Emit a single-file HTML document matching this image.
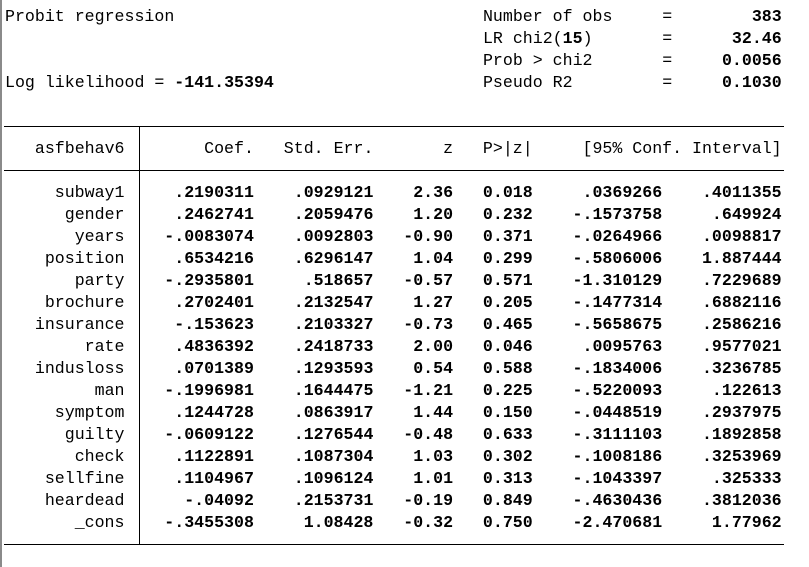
<!DOCTYPE html>
<html><head><meta charset="utf-8"><style>
html,body{margin:0;padding:0;background:#fff;width:809px;height:567px;overflow:hidden}
body{position:relative;font-family:"Liberation Mono","Courier New",monospace;font-size:16.6px;color:#000}
.lb{position:absolute;left:0;top:0;width:2px;height:567px;background:#8a8a8a}
.h{position:absolute;height:1px;background:#000;left:4px;width:780px}
.v{position:absolute;left:139px;top:127px;width:1px;height:418px;background:#000}
.row{position:absolute;left:5px;height:22px;line-height:22px;white-space:pre;width:78ch;margin-top:1px}
.row span{position:absolute;top:0}
.c span{display:inline-block;position:static;text-align:right}
b{font-weight:bold}
.n{width:12ch}.g{width:2ch}.c1{width:11ch}.c2{width:12ch}.c3{width:8ch}.c4{width:8ch}.c5{width:13ch}.c6{width:12ch}.ci{width:25ch}
.d span:not(.n){font-weight:bold}
</style></head><body>
<div class="lb"></div>
<div class="row" style="top:5px"><span style="left:0">Probit regression</span><span style="left:48ch">Number of obs</span><span style="left:66ch">=</span><span style="right:0"><b>383</b></span></div>
<div class="row" style="top:27px"><span style="left:48ch">LR chi2(<b>15</b>)</span><span style="left:66ch">=</span><span style="right:0"><b>32.46</b></span></div>
<div class="row" style="top:49px"><span style="left:48ch">Prob &gt; chi2</span><span style="left:66ch">=</span><span style="right:0"><b>0.0056</b></span></div>
<div class="row" style="top:71px"><span style="left:0">Log likelihood = <b>-141.35394</b></span><span style="left:48ch">Pseudo R2</span><span style="left:66ch">=</span><span style="right:0"><b>0.1030</b></span></div>
<div class="h" style="top:126px"></div>
<div class="h" style="top:170px"></div>
<div class="h" style="top:544px"></div>
<div class="v"></div>
<div class="row c" style="top:137px"><span class="n">asfbehav6</span><span class="g"></span><span class="c1">Coef.</span><span class="c2">Std. Err.</span><span class="c3">z</span><span class="c4">P&gt;|z|</span><span class="ci">[95% Conf. Interval]</span></div>
<div class="row c d" style="top:181px"><span class="n">subway1</span><span class="g"></span><span class="c1">.2190311</span><span class="c2">.0929121</span><span class="c3">2.36</span><span class="c4">0.018</span><span class="c5">.0369266</span><span class="c6">.4011355</span></div>
<div class="row c d" style="top:203px"><span class="n">gender</span><span class="g"></span><span class="c1">.2462741</span><span class="c2">.2059476</span><span class="c3">1.20</span><span class="c4">0.232</span><span class="c5">-.1573758</span><span class="c6">.649924</span></div>
<div class="row c d" style="top:225px"><span class="n">years</span><span class="g"></span><span class="c1">-.0083074</span><span class="c2">.0092803</span><span class="c3">-0.90</span><span class="c4">0.371</span><span class="c5">-.0264966</span><span class="c6">.0098817</span></div>
<div class="row c d" style="top:247px"><span class="n">position</span><span class="g"></span><span class="c1">.6534216</span><span class="c2">.6296147</span><span class="c3">1.04</span><span class="c4">0.299</span><span class="c5">-.5806006</span><span class="c6">1.887444</span></div>
<div class="row c d" style="top:269px"><span class="n">party</span><span class="g"></span><span class="c1">-.2935801</span><span class="c2">.518657</span><span class="c3">-0.57</span><span class="c4">0.571</span><span class="c5">-1.310129</span><span class="c6">.7229689</span></div>
<div class="row c d" style="top:291px"><span class="n">brochure</span><span class="g"></span><span class="c1">.2702401</span><span class="c2">.2132547</span><span class="c3">1.27</span><span class="c4">0.205</span><span class="c5">-.1477314</span><span class="c6">.6882116</span></div>
<div class="row c d" style="top:313px"><span class="n">insurance</span><span class="g"></span><span class="c1">-.153623</span><span class="c2">.2103327</span><span class="c3">-0.73</span><span class="c4">0.465</span><span class="c5">-.5658675</span><span class="c6">.2586216</span></div>
<div class="row c d" style="top:335px"><span class="n">rate</span><span class="g"></span><span class="c1">.4836392</span><span class="c2">.2418733</span><span class="c3">2.00</span><span class="c4">0.046</span><span class="c5">.0095763</span><span class="c6">.9577021</span></div>
<div class="row c d" style="top:357px"><span class="n">indusloss</span><span class="g"></span><span class="c1">.0701389</span><span class="c2">.1293593</span><span class="c3">0.54</span><span class="c4">0.588</span><span class="c5">-.1834006</span><span class="c6">.3236785</span></div>
<div class="row c d" style="top:379px"><span class="n">man</span><span class="g"></span><span class="c1">-.1996981</span><span class="c2">.1644475</span><span class="c3">-1.21</span><span class="c4">0.225</span><span class="c5">-.5220093</span><span class="c6">.122613</span></div>
<div class="row c d" style="top:401px"><span class="n">symptom</span><span class="g"></span><span class="c1">.1244728</span><span class="c2">.0863917</span><span class="c3">1.44</span><span class="c4">0.150</span><span class="c5">-.0448519</span><span class="c6">.2937975</span></div>
<div class="row c d" style="top:423px"><span class="n">guilty</span><span class="g"></span><span class="c1">-.0609122</span><span class="c2">.1276544</span><span class="c3">-0.48</span><span class="c4">0.633</span><span class="c5">-.3111103</span><span class="c6">.1892858</span></div>
<div class="row c d" style="top:445px"><span class="n">check</span><span class="g"></span><span class="c1">.1122891</span><span class="c2">.1087304</span><span class="c3">1.03</span><span class="c4">0.302</span><span class="c5">-.1008186</span><span class="c6">.3253969</span></div>
<div class="row c d" style="top:467px"><span class="n">sellfine</span><span class="g"></span><span class="c1">.1104967</span><span class="c2">.1096124</span><span class="c3">1.01</span><span class="c4">0.313</span><span class="c5">-.1043397</span><span class="c6">.325333</span></div>
<div class="row c d" style="top:489px"><span class="n">heardead</span><span class="g"></span><span class="c1">-.04092</span><span class="c2">.2153731</span><span class="c3">-0.19</span><span class="c4">0.849</span><span class="c5">-.4630436</span><span class="c6">.3812036</span></div>
<div class="row c d" style="top:511px"><span class="n">_cons</span><span class="g"></span><span class="c1">-.3455308</span><span class="c2">1.08428</span><span class="c3">-0.32</span><span class="c4">0.750</span><span class="c5">-2.470681</span><span class="c6">1.77962</span></div>
</body></html>
